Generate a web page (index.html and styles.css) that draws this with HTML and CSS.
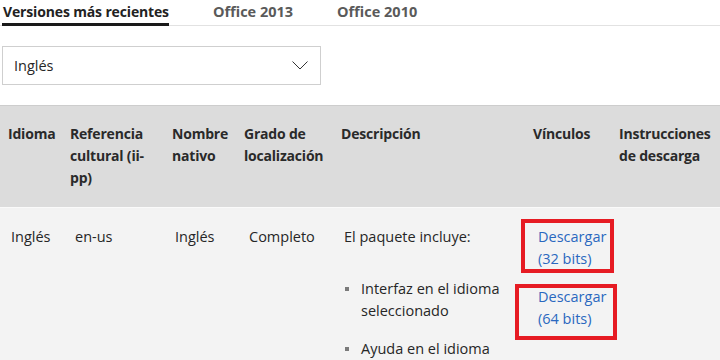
FILE: index.html
```html
<!DOCTYPE html>
<html lang="es">
<head>
<meta charset="utf-8">
<title>Versiones</title>
<link rel="stylesheet" href="styles.css">
</head>
<body>
<nav class="tabs">
  <span class="tab active">Versiones más recientes</span>
  <span class="tab">Office 2013</span>
  <span class="tab">Office 2010</span>
</nav>
<div class="select">
  <span>Inglés</span>
  <svg class="chev" width="16" height="9" viewBox="0 0 16 9"><polyline points="0.5,0.5 8,8 15.5,0.5" fill="none" stroke="#333" stroke-width="1"/></svg>
</div>
<table class="grid">
  <colgroup>
    <col class="c1"><col class="c2"><col class="c3"><col class="c4"><col class="c5"><col class="c6"><col class="c7">
  </colgroup>
  <thead>
    <tr>
      <th>Idioma</th>
      <th>Referencia<br>cultural (ii-<br>pp)</th>
      <th>Nombre<br>nativo</th>
      <th>Grado de<br>localización</th>
      <th>Descripción</th>
      <th>Vínculos</th>
      <th>Instrucciones<br>de descarga</th>
    </tr>
  </thead>
  <tbody>
    <tr>
      <td>Inglés</td>
      <td class="shift">en-us</td>
      <td>Inglés</td>
      <td class="shift">Completo</td>
      <td>
        <p class="lead">El paquete incluye:</p>
        <ul class="bul">
          <li>Interfaz en el idioma<br>seleccionado</li>
          <li>Ayuda en el idioma<br>seleccionado</li>
        </ul>
      </td>
      <td class="links">
        <a class="dl first" href="#">Descargar<br>(32 bits)<span class="mark m1"></span></a>
        <a class="dl" href="#">Descargar<br>(64 bits)<span class="mark m2"></span></a>
      </td>
      <td></td>
    </tr>
  </tbody>
</table>
</body>
</html>
```
FILE: styles.css
```css
html, body { margin: 0; padding: 0; overflow: hidden; background: #fff; }
body {
  width: 720px; height: 360px;
  font-family: "Open Sans", "Noto Sans", sans-serif;
  color: #262626;
  font-size: 14px;
}
.tabs {
  display: flex;
  gap: 44px;
  padding: 1px 0 0 3px;
  border-bottom: 1px solid #e2e2e2;
}
.tab {
  font-weight: 700;
  font-size: 14.5px;
  line-height: 21px;
  color: #5a5a5a;
  padding-bottom: 3px;
  letter-spacing: 0;
}
.tab.active {
  font-size: 14px;
  letter-spacing: -0.15px;
  color: #222;
  border-bottom: 3px solid #1a1a1a;
  padding-bottom: 0;
  margin-bottom: -1px;
  margin-left: -1px;
  padding-left: 1px;
}
.select {
  margin: 20px 0 0 2px;
  height: 37px;
  border: 1px solid #cfcfcf;
  display: flex;
  align-items: center;
  justify-content: space-between;
  padding: 0 12px 0 11px;
  box-sizing: content-box;
  width: 294px;
  font-size: 14.5px;
}
.grid {
  margin-top: 20px;
  width: 720px;
  table-layout: fixed;
  border-collapse: collapse;
}
.c1 { width: 62px; } .c2 { width: 102px; } .c3 { width: 72px; } .c4 { width: 97px; }
.c5 { width: 192px; } .c6 { width: 86px; } .c7 { width: 109px; }
thead tr { background: #dcdcdc; border-top: 1px solid #cdcdcd; }
th {
  text-align: left;
  vertical-align: top;
  font-weight: 700;
  color: #2a2a2a;
  line-height: 22px;
  padding: 17px 2px 18px 8px;
  letter-spacing: -0.2px;
}
tbody tr { background: #f3f3f3; border-top: 1px solid #fafafa; }
td {
  vertical-align: top;
  line-height: 22px;
  padding: 18px 2px 0 11px;
  font-size: 14.5px;
}
td.shift { padding-left: 13px; }
.lead { margin: 0; }
.bul { list-style: none; margin: 30px 0 0 0; padding: 0 0 0 17px; }
.bul li { position: relative; margin-bottom: 16px; }
.bul li::before {
  content: "";
  position: absolute;
  left: -16px; top: 9px;
  width: 4px; height: 4px;
  background: #7a7a7a;
}
.links { padding-left: 13px; }
.dl {
  display: block;
  position: relative;
  color: #2a68bf;
  text-decoration: none;
  margin-bottom: 16px;
}
.mark {
  position: absolute;
  border: 4px solid #e61b23;
  box-sizing: border-box;
}
.m1 { left: -17px; top: -7px; width: 93px; height: 54px; }
.m2 { left: -23px; top: -2px; width: 102px; height: 56px; }
```
